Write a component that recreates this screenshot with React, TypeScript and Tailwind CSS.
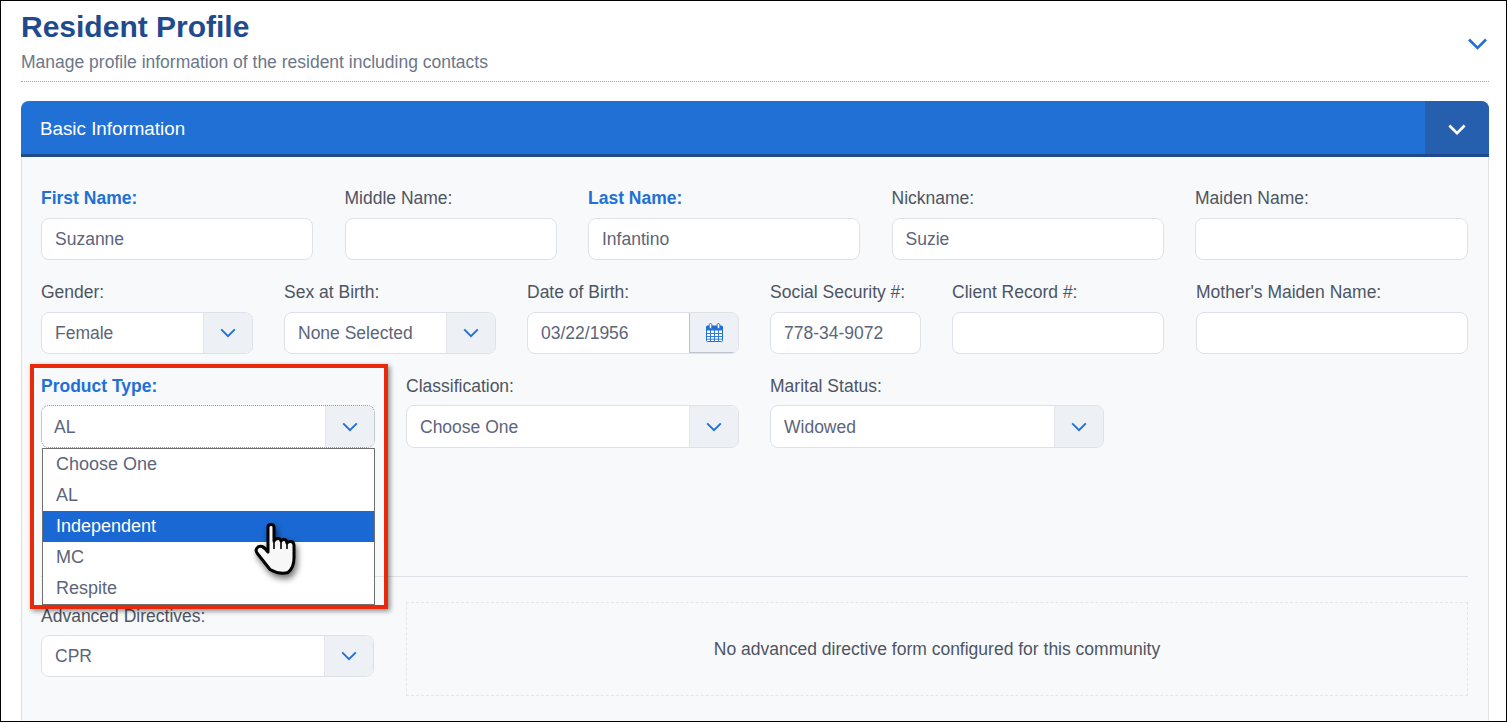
const font = { fontFamily: '"Liberation Sans", Arial, sans-serif' };

function Chevron({ className, weight = 2.4 }: { className: string; weight?: number }) {
  return (
    <svg viewBox="0 0 20 12" fill="none" className={className}>
      <polyline points="1.5,1.5 10,10 18.5,1.5" stroke="currentColor" strokeWidth={weight} />
    </svg>
  );
}

function CalendarIcon() {
  return (
    <svg viewBox="0 0 17 19" className="w-[17px] h-[19px]" fill="none">
      <rect x="0.5" y="3" width="16" height="15.5" rx="1" fill="#ffffff" stroke="#2170d6" />
      <rect x="0.5" y="3" width="16" height="4.5" fill="#2170d6" />
      <path d="M1 10.5h15M1 13.5h15M1 16.2h15M4.5 7v11M8.5 7v11M12.5 7v11" stroke="#2170d6" strokeWidth="0.9" />
      <rect x="3.2" y="0.5" width="2.6" height="5" rx="1.3" fill="#ffffff" stroke="#2170d6" strokeWidth="0.9" />
      <rect x="11.2" y="0.5" width="2.6" height="5" rx="1.3" fill="#ffffff" stroke="#2170d6" strokeWidth="0.9" />
    </svg>
  );
}

function Label({ text, required }: { text: string; required?: boolean }) {
  return (
    <div
      className={`h-6 leading-6 text-[17.5px] whitespace-nowrap ${
        required ? "font-bold text-[#2170d6]" : "text-[#4d5563]"
      }`}
    >
      {text}
    </div>
  );
}

function TextField({ label, value, required, width }: { label: string; value?: string; required?: boolean; width: string }) {
  return (
    <div className={width}>
      <Label text={label} required={required} />
      <div className="mt-2 h-[42px] rounded-lg border border-[#dee2e8] bg-white px-[13px] leading-[40px] text-[17.5px] text-[#5c6579]">
        {value}
      </div>
    </div>
  );
}

function SelectField({ label, value, required, width, tall, tight, focused }: { label: string; value: string; required?: boolean; width: string; tall?: boolean; tight?: boolean; focused?: boolean }) {
  return (
    <div className={width}>
      <Label text={label} required={required} />
      <div
        className={`flex rounded-lg border bg-white text-[17.5px] text-[#5c6579] overflow-hidden ${
          tall ? "mt-[7px] h-[43px] leading-[42px]" : tight ? "mt-[7px] h-[42px] leading-[40px]" : "mt-2 h-[42px] leading-[40px]"
        } ${focused ? "border-dotted border-[#8a93a3]" : "border-[#dee2e8]"}`}
      >
        <div className={`flex-1 whitespace-nowrap ${focused ? "px-3" : "px-[13px]"}`}>{value}</div>
        <div className="w-[49px] flex items-center justify-center bg-[#edf0f5] border-l border-[#e3e6ec]">
          <Chevron className="w-[16px] h-[10px] text-[#2170d6]" />
        </div>
      </div>
    </div>
  );
}

function Hand() {
  return (
    <svg
      viewBox="0 0 48 58"
      className="absolute left-[251px] top-[519px] w-12 h-[58px] drop-shadow-[2px_4px_3px_rgba(0,0,0,0.55)]"
    >
      <path
        d="M16 7 C16 3.5 22 3.5 22 7 L22 21 C24 17.5 28.5 17.5 29 21 C31 18.5 34.5 19 35 23 C37 20.5 41.5 21 42 25 L42 38 C42 46 39 50 36 52.5 C30 54 24 53 18 49.5 L5 33 C2.5 29 6 25.5 10 26.5 C12.5 27.5 14.5 30 16 32 Z"
        fill="#f7f7f7"
        stroke="#000000"
        strokeWidth="3"
        strokeLinejoin="round"
      />
      <path d="M22 20 L22 29 M29 21 L29 29 M35 23 L35 29" stroke="#000000" strokeWidth="1.6" fill="none" />
    </svg>
  );
}

const options = ["Choose One", "AL", "Independent", "MC", "Respite"];

export default function App() {
  return (
    <div style={font} className="relative w-[1507px] h-[722px] overflow-hidden border border-black bg-white pl-5 pr-[17px]">
      {/* Page header */}
      <div className="h-[81px] flex justify-between border-b border-dotted border-[#a8a8a8]">
        <div>
          <h1 className="pt-[9px] text-[30px] leading-[34px] font-bold text-[#1f4b8e]">Resident Profile</h1>
          <p className="mt-[6px] text-[17.5px] leading-6 text-[#6b7789]">
            Manage profile information of the resident including contacts
          </p>
        </div>
        <Chevron className="mt-[37px] mr-px w-[21px] h-3 text-[#2170d6]" weight={2.6} />
      </div>

      {/* Basic information panel */}
      <div className="mt-[19px] h-[700px] rounded-t-lg border-x border-[#dee2e8] bg-[#f8f9fb]">
        <div className="-mx-px h-14 flex justify-between overflow-hidden rounded-t-lg border-b-[3px] border-[#204a8c] bg-[#2170d6]">
          <div className="pl-[19px] leading-[55px] text-white text-[18.8px]">Basic Information</div>
          <div className="w-[64px] flex items-center justify-center bg-[#255fad]">
            <Chevron className="mt-[3px] w-[18px] h-[11px] text-white" weight={3} />
          </div>
        </div>

        <div className="pl-[19px] pr-5 pt-[29px]">
          <div className="flex justify-between">
            <TextField width="w-[272px]" label="First Name:" value="Suzanne" required />
            <TextField width="w-[212px]" label="Middle Name:" />
            <TextField width="w-[272px]" label="Last Name:" value="Infantino" required />
            <TextField width="w-[272px]" label="Nickname:" value="Suzie" />
            <TextField width="w-[273px]" label="Maiden Name:" />
          </div>

          <div className="mt-5 flex gap-[31px]">
            <SelectField width="w-[212px]" label="Gender:" value="Female" />
            <SelectField width="w-[212px]" label="Sex at Birth:" value="None Selected" />
            <div className="w-[212px]">
              <Label text="Date of Birth:" />
              <div className="mt-2 h-[42px] flex overflow-hidden rounded-lg border border-[#dee2e8] bg-white text-[17.5px] text-[#5c6579]">
                <div className="flex-1 px-[13px] leading-[40px]">03/22/1956</div>
                <div className="w-[49px] flex items-center justify-center bg-[#edf0f5] border-l border-b border-[#bfc5d0]">
                  <CalendarIcon />
                </div>
              </div>
            </div>
            <TextField width="w-[151px]" label="Social Security #:" value="778-34-9072" />
            <TextField width="w-[212px]" label="Client Record #:" />
            <div className="ml-px flex-1">
              <TextField width="w-full" label="Mother's Maiden Name:" />
            </div>
          </div>

          <div className="mt-5 flex gap-[31px]">
            <SelectField width="w-[334px]" label="Product Type:" value="AL" required tall focused />
            <SelectField width="w-[333px]" label="Classification:" value="Choose One" tall />
            <SelectField width="w-[334px]" label="Marital Status:" value="Widowed" tall />
          </div>

          <div className="mt-[128px] border-t border-[#dee2e8] pt-[25px] flex gap-8">
            <div className="pt-[2px]">
              <SelectField width="w-[333px]" label="Advanced Directives:" value="CPR" tight />
            </div>
            <div className="flex-1 h-[94px] flex items-center justify-center border border-dashed border-[#e3e6ec] text-[17.5px] text-[#4d5563]">
              No advanced directive form configured for this community
            </div>
          </div>
        </div>
      </div>

      {/* Open Product Type dropdown */}
      <div className="absolute left-[41px] top-[447px] w-[333px] h-[157px] border border-[#6f6f6f] bg-white text-[18px] text-[#5c6579]">
        {options.map((o) => (
          <div
            key={o}
            className={`h-[31px] px-[13px] leading-[30px] ${o === "Independent" ? "bg-[#1a68d4] text-white" : ""}`}
          >
            {o}
          </div>
        ))}
      </div>

      {/* Callout box and pointer */}
      <div className="absolute left-[29px] top-[363px] w-[358px] h-[245px] border-4 border-[#e72a0b] shadow-[2px_2px_5px_rgba(0,0,0,0.45)]" />
      <Hand />
    </div>
  );
}
